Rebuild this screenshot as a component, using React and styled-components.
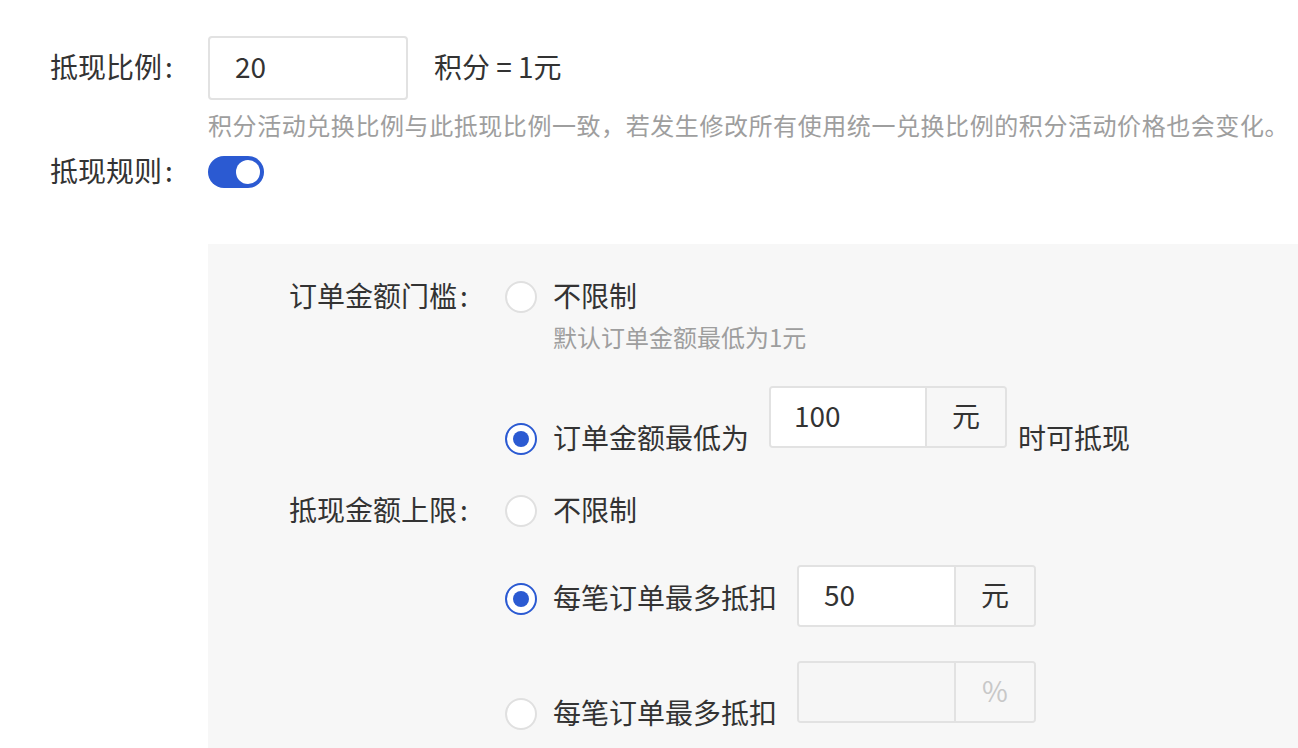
import React from "react";
import styled, { createGlobalStyle } from "styled-components";

const Global = createGlobalStyle`
  html, body { margin: 0; padding: 0; background: #fff; }
  body {
    font-family: "Noto Sans CJK SC", "Noto Sans", sans-serif;
    color: #333;
    overflow: hidden;
  }
`;

const Page = styled.div`
  width: 1298px;
  height: 748px;
  padding-top: 36px;
  box-sizing: border-box;
  overflow: hidden;
`;

const Row = styled.div`
  display: flex;
  align-items: center;
  padding-left: 50px;
  margin-top: ${(p) => p.$mt || 0}px;
`;

const Label = styled.div`
  width: ${(p) => p.$w || 158}px;
  flex-shrink: 0;
  font-size: 28px;
  line-height: 32px;
  padding-bottom: 4px;
  color: #333;
  white-space: nowrap;
`;

const Colon = styled.span`
  margin-left: 3px;
`;

const TextInput = styled.div`
  width: 200px;
  height: 64px;
  box-sizing: border-box;
  border: 2px solid #e2e2e2;
  border-radius: 4px;
  background: #fff;
  display: flex;
  align-items: center;
  padding: 0 0 4px 25px;
  font-size: 28px;
  color: #333;
`;

const Text = styled.span`
  font-size: 28px;
  line-height: 32px;
  padding-bottom: 4px;
  color: #333;
  white-space: nowrap;
  margin-left: ${(p) => p.$ml || 0}px;
  margin-top: ${(p) => p.$mt || 0}px;
`;

const Hint = styled.div`
  font-size: 24px;
  line-height: 32px;
  padding-bottom: 4px;
  color: #9e9e9e;
  white-space: nowrap;
  letter-spacing: ${(p) => p.$ls || 0}px;
  margin-left: ${(p) => p.$ml || 0}px;
  margin-top: ${(p) => p.$mt || 0}px;
`;

const Switch = styled.div`
  width: 56px;
  height: 32px;
  border-radius: 16px;
  background: #2b5ad2;
  position: relative;
  &::after {
    content: "";
    position: absolute;
    right: 4px;
    top: 4px;
    width: 24px;
    height: 24px;
    border-radius: 50%;
    background: #fff;
  }
`;

const Panel = styled.div`
  margin-top: 54px;
  margin-left: 208px;
  background: #f7f7f7;
  padding: 35px 0 60px 81px;
  min-height: 600px;
`;

const Group = styled.div`
  display: flex;
  align-items: flex-start;
  margin-top: ${(p) => p.$mt || 0}px;
`;

const Options = styled.div`
  display: flex;
  flex-direction: column;
`;

const Option = styled.div`
  display: flex;
  align-items: flex-start;
  margin-top: ${(p) => p.$mt || 0}px;
`;

const RadioLine = styled.div`
  display: flex;
  align-items: center;
  height: 36px;
  margin-top: ${(p) => p.$mt || 0}px;
`;

const Radio = styled.span`
  width: 32px;
  height: 32px;
  box-sizing: border-box;
  border-radius: 50%;
  background: #fff;
  border: 2px solid ${(p) => (p.$checked ? "#2b5ad2" : "#e0e0e0")};
  display: flex;
  align-items: center;
  justify-content: center;
  margin-right: 16px;
  flex-shrink: 0;
  &::after {
    content: "";
    display: ${(p) => (p.$checked ? "block" : "none")};
    width: 16px;
    height: 16px;
    border-radius: 50%;
    background: #2b5ad2;
  }
`;

const InputGroup = styled.div`
  display: flex;
  height: ${(p) => p.$h || 62}px;
  box-sizing: border-box;
  border: 2px solid #e2e2e2;
  border-radius: 4px;
  overflow: hidden;
  margin-left: 20px;
  flex-shrink: 0;
`;

const GroupField = styled.div`
  width: ${(p) => p.$w || 156}px;
  box-sizing: border-box;
  background: ${(p) => (p.$disabled ? "#f6f6f6" : "#fff")};
  border-right: 2px solid #e2e2e2;
  display: flex;
  align-items: center;
  padding: 0 0 4px ${(p) => p.$pl || 24}px;
  font-size: 28px;
  color: #333;
`;

const Addon = styled.div`
  width: 78px;
  background: #f7f7f7;
  display: flex;
  align-items: center;
  justify-content: center;
  padding-bottom: 4px;
  box-sizing: border-box;
  font-size: 28px;
  color: ${(p) => (p.$disabled ? "#c8c8c8" : "#333")};
`;

export default function App() {
  return (
    <>
      <Global />
      <Page>
        <Row>
          <Label>
            抵现比例<Colon>:</Colon>
          </Label>
          <TextInput>20</TextInput>
          <Text $ml={26}>积分 = 1元</Text>
        </Row>
        <Hint $ml={208} $mt={9} $ls={0.57}>
          积分活动兑换比例与此抵现比例一致，若发生修改所有使用统一兑换比例的积分活动价格也会变化。
        </Hint>
        <Row $mt={9}>
          <Label>
            抵现规则<Colon>:</Colon>
          </Label>
          <Switch />
        </Row>

        <Panel>
          <Group>
            <Label $w={216}>
              订单金额门槛<Colon>:</Colon>
            </Label>
            <Options>
              <RadioLine>
                <Radio />
                <Text>不限制</Text>
              </RadioLine>
              <Hint $ml={48} $mt={6}>默认订单金额最低为1元</Hint>
              <Option $mt={29}>
                <RadioLine $mt={35}>
                  <Radio $checked />
                  <Text>订单金额最低为</Text>
                </RadioLine>
                <InputGroup $h={62}>
                  <GroupField $w={156} $pl={23}>100</GroupField>
                  <Addon>元</Addon>
                </InputGroup>
                <Text $ml={11} $mt={35}>时可抵现</Text>
              </Option>
            </Options>
          </Group>

          <Group $mt={36}>
            <Label $w={216}>
              抵现金额上限<Colon>:</Colon>
            </Label>
            <Options>
              <RadioLine>
                <Radio />
                <Text>不限制</Text>
              </RadioLine>
              <Option $mt={36}>
                <RadioLine $mt={16}>
                  <Radio $checked />
                  <Text>每笔订单最多抵扣</Text>
                </RadioLine>
                <InputGroup $h={62}>
                  <GroupField $w={157} $pl={25}>50</GroupField>
                  <Addon>元</Addon>
                </InputGroup>
              </Option>
              <Option $mt={34}>
                <RadioLine $mt={35}>
                  <Radio />
                  <Text>每笔订单最多抵扣</Text>
                </RadioLine>
                <InputGroup $h={62}>
                  <GroupField $w={157} $disabled />
                  <Addon $disabled>%</Addon>
                </InputGroup>
              </Option>
            </Options>
          </Group>
        </Panel>
      </Page>
    </>
  );
}
